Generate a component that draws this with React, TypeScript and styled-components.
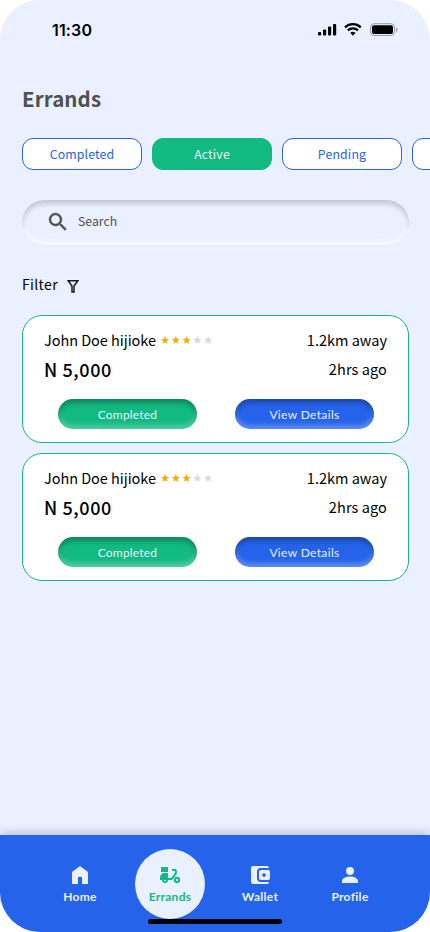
import React from 'react';
import styled, { createGlobalStyle } from 'styled-components';
import { MdSearch } from 'react-icons/md';

const Global = createGlobalStyle`
  * { box-sizing: border-box; }
  body { margin: 0; background: #fff; overflow: hidden; }
  button { border: 0; padding: 0; background: none; font: inherit; }
`;

const Screen = styled.main`
  position: relative;
  display: flex;
  flex-direction: column;
  width: 430px;
  height: 932px;
  overflow: hidden;
  border-radius: 40px;
  background: #eaf0ff;
  color: #000;
  font-family: 'Noto Sans CJK SC', 'Noto Sans', sans-serif;
`;

const StatusBar = styled.header`
  display: flex;
  justify-content: space-between;
  align-items: center;
  height: 60px;
  padding: 0 31px 0 52px;
`;

const Clock = styled.span`
  font: 600 16px/20px Inter, sans-serif;
  letter-spacing: 0.15px;
  color: #000;
`;

const Content = styled.section`
  display: flex;
  flex-direction: column;
  flex: 1;
  padding: 23px 21px 0 22px;
`;

const Label = styled.span<{ $size: number; $weight?: number; $spacing?: number; $line?: number }>`
  font-size: ${p => p.$size}px;
  font-weight: ${p => p.$weight ?? 400};
  letter-spacing: ${p => p.$spacing ?? 0}px;
  line-height: ${p => p.$line ?? 20}px;
  white-space: nowrap;
`;

const ActionLabel = styled(Label)`
  display: block;
  padding-top: 2px;
  font-family: Lato, sans-serif;
`;

const Title = styled.h1`
  margin: 0;
  color: #505050;
  font-size: 20.5px;
  font-weight: 700;
  line-height: 30px;
  letter-spacing: 0.1px;
`;

const Tabs = styled.div`
  display: flex;
  gap: 10px;
  margin: 25px -21px 0 0;
  overflow: hidden;
`;

const Tab = styled.button<{ $active?: boolean }>`
  flex: 0 0 120px;
  height: 32px;
  padding-bottom: 5px;
  border: 1px solid ${p => (p.$active ? '#12b981' : '#2563eb')};
  border-radius: 11px;
  background: ${p => (p.$active ? '#12b981' : '#fff')};
  color: ${p => (p.$active ? '#eaf0ff' : '#2563eb')};
`;

const Search = styled.div`
  display: flex;
  align-items: center;
  gap: 8px;
  height: 45px;
  margin-top: 30px;
  padding: 0 24px 3px;
  border-radius: 23px;
  color: #505050;
  box-shadow: inset 0 4px 5px #0000002b, inset 0 -4px 5px #ffffffb8;

  svg { margin-top: 2px; }
  svg path:last-child { stroke: currentColor; stroke-width: 0.4; }
`;

const FilterRow = styled.div`
  display: flex;
  align-items: center;
  gap: 9px;
  height: 20px;
  margin-top: 29px;

  svg { margin-top: 4px; }
`;

const Cards = styled.div`
  display: flex;
  flex-direction: column;
  gap: 10px;
  margin-top: 21px;
`;

const Card = styled.article`
  height: 128px;
  padding: 14px 21px 0;
  border: 1px solid #12b981;
  border-radius: 20px;
  background: #fff;
`;

const Row = styled.div<{ $top?: number }>`
  display: flex;
  justify-content: space-between;
  align-items: center;
  height: 20px;
  margin-top: ${p => p.$top ?? 0}px;
`;

const Person = styled.div`
  display: flex;
  align-items: center;
  gap: 4px;
`;

const Actions = styled.div`
  display: flex;
  justify-content: space-between;
  margin: 20px 13px 0 14px;
`;

const Action = styled.button<{ $green?: boolean }>`
  width: 139px;
  height: 30px;
  border-radius: 15px;
  background: ${p => (p.$green ? '#12b981' : '#2563eb')};
  color: #eaf0ff;
  box-shadow: inset 0 4px 5px #00000045, inset 0 -4px 5px #ffffff45;
`;

const Nav = styled.nav`
  display: flex;
  justify-content: center;
  gap: 20px;
  height: 97px;
  padding-top: 14px;
  background: #2563eb;
  box-shadow: 0 -2px 9px #00000038;
`;

const NavItem = styled.button<{ $active?: boolean }>`
  display: flex;
  flex-direction: column;
  align-items: center;
  width: 70px;
  height: 70px;
  padding-top: 14px;
  border-radius: 50%;
  color: ${p => (p.$active ? '#12b981' : '#eaf0ff')};
  background: ${p => (p.$active ? '#eaf0ff' : 'transparent')};
`;

const HomeIndicator = styled.div`
  position: absolute;
  left: 148px;
  bottom: 8px;
  width: 134px;
  height: 5px;
  border-radius: 3px;
  background: #000;
`;

const StatusIcons = () => (
  <svg width="82" height="20" viewBox="0 0 82 20" fill="#000">
    <rect x="1" y="12" width="3.2" height="3.6" rx="1" />
    <rect x="6" y="9.5" width="3.2" height="6.1" rx="1" />
    <rect x="11" y="6.5" width="3.2" height="9.1" rx="1" />
    <rect x="16" y="4" width="3.2" height="11.6" rx="1" />
    <path d="M28 7.4a11.4 11.4 0 0 1 15.8 0M30.8 10.4a7.5 7.5 0 0 1 10.2 0" fill="none" stroke="#000" strokeWidth="2.2" />
    <path d="M33.2 12.8a4.2 4.2 0 0 1 5.4 0l-2.7 2.9Z" />
    <rect x="53.5" y="3.7" width="24" height="11.8" rx="3.5" fill="none" stroke="#999ca7" />
    <rect x="55" y="5.2" width="21" height="8.8" rx="2" />
    <path d="M79 7.6c2.2.8 2.2 3.6 0 4.4Z" fill="#999ca7" />
  </svg>
);

const Funnel = () => (
  <svg width="12" height="14" viewBox="0 0 12 14" fill="none" stroke="#1c1c1c" strokeWidth="1.5">
    <path d="M1.2 1.8h9.6L7 7v6H5V7Z" />
  </svg>
);

const Stars = () => (
  <svg width="53" height="10" viewBox="0 0 53 10">
    {[0, 1, 2, 3, 4].map(i => (
      <path key={i} transform={`translate(${i * 10.8 + 1} 1)`} fill={i < 3 ? '#eab308' : '#d9d9d9'}
        d="m4 0 1.1 2.8 3 .2-2.3 1.9.8 2.9L4 6.2 1.4 7.8l.8-2.9L-.1 3l3-.2Z" />
    ))}
  </svg>
);

type IconName = 'home' | 'errands' | 'wallet' | 'profile';

const NavIcon = ({ name }: { name: IconName }) => (
  <svg width="24" height="24" viewBox="0 0 24 24" fill="currentColor">
    {name === 'home' && <path d="M4 9 12 3l8 6v12h-6v-7h-4v7H4Z" />}
    {name === 'errands' && (
      <>
        <path d="M3 4h7v5H3Z" />
        <path d="M2 17v-2.5C2 12 4 10 6.5 10H10v5h3.1l3.7-4.8V8H14V6h3.2c1 0 1.6.7 1.6 1.6v3.3L14.1 17Z" />
        <circle cx="7" cy="17" r="3" />
        <path d="M6 17h2.2a1.1 1.1 0 0 1-2.2 0Z" fill="#eaf0ff" />
        <circle cx="19" cy="17" r="2.2" fill="#eaf0ff" stroke="currentColor" strokeWidth="1.9" />
        <circle cx="19" cy="17" r=".6" />
      </>
    )}
    {name === 'wallet' && (
      <>
        <path d="M5 3h14a2 2 0 0 1 2 2h-8a4 4 0 0 0-4 4v6a4 4 0 0 0 4 4h8a2 2 0 0 1-2 2H5a2 2 0 0 1-2-2V5c0-1.1.9-2 2-2Z" />
        <path fillRule="evenodd" d="M13 7h7c1.2 0 2 .8 2 2v6c0 1.2-.8 2-2 2h-7c-1.2 0-2-.8-2-2V9c0-1.2.8-2 2-2Zm3 3.2a1.8 1.8 0 1 0 .01 0Z" />
      </>
    )}
    {name === 'profile' && <path d="M12 12a4 4 0 1 0 0-8 4 4 0 0 0 0 8Zm0 1.5c-4.2 0-8 1.8-8 4.5v2h16v-2c0-2.7-3.8-4.5-8-4.5Z" />}
  </svg>
);

const NavText = styled.span`
  font-family: Lato, sans-serif;
  font-size: 12px;
  font-weight: 700;
  letter-spacing: 0.3px;
  line-height: 20px;
`;

const ErrandCard = () => (
  <Card>
    <Row>
      <Person><Label $size={14.5} $spacing={-0.05}>John Doe hijioke</Label><Stars /></Person>
      <Label $size={14.5}>1.2km away</Label>
    </Row>
    <Row $top={9}>
      <Label $size={18} $weight={500} $spacing={0.6}>N 5,000</Label>
      <Label $size={14.5} $spacing={0.1}>2hrs ago</Label>
    </Row>
    <Actions>
      <Action $green><ActionLabel $size={12} $spacing={0.2}>Completed</ActionLabel></Action>
      <Action><ActionLabel $size={12} $spacing={0.35}>View Details</ActionLabel></Action>
    </Actions>
  </Card>
);

const navItems: { name: IconName; label: string }[] = [
  { name: 'home', label: 'Home' },
  { name: 'errands', label: 'Errands' },
  { name: 'wallet', label: 'Wallet' },
  { name: 'profile', label: 'Profile' },
];

export default function App() {
  return (
    <>
      <Global />
      <Screen>
        <StatusBar><Clock>11:30</Clock><StatusIcons /></StatusBar>
        <Content>
          <Title>Errands</Title>
          <Tabs>
            <Tab><Label $size={12.3} $spacing={0.15}>Completed</Label></Tab>
            <Tab $active><Label $size={12.3} $spacing={0.15}>Active</Label></Tab>
            <Tab><Label $size={12.3} $spacing={0.15}>Pending</Label></Tab>
            <Tab />
          </Tabs>
          <Search><MdSearch size={24} /><Label $size={12.3}>Search</Label></Search>
          <FilterRow><Label $size={14} $spacing={0.35}>Filter</Label><Funnel /></FilterRow>
          <Cards><ErrandCard /><ErrandCard /></Cards>
        </Content>
        <Nav>
          {navItems.map(({ name, label }) => (
            <NavItem key={name} $active={name === 'errands'}>
              <NavIcon name={name} />
              <NavText>{label}</NavText>
            </NavItem>
          ))}
        </Nav>
        <HomeIndicator />
      </Screen>
    </>
  );
}
